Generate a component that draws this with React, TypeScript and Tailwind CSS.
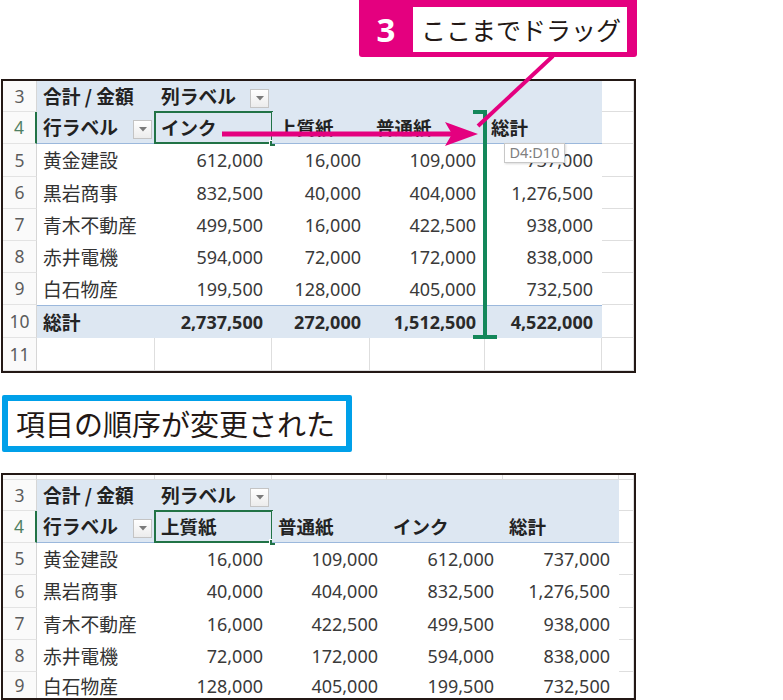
import React from 'react';

const jp = "font-['Noto_Sans_CJK_JP',sans-serif]";
const num = "font-['Noto_Sans','Noto_Sans_CJK_JP',sans-serif]";

type Data = { label: string; values: string[] };

interface SheetProps {
  cols: string;
  heights: string[]; // rows 3..11 (or 3..9) in order
  headers: string[];
  rows: Data[];
  total?: Data;
  showBlankRow?: boolean;
  partialTop?: boolean;
  className?: string;
}

const Dropdown: React.FC<{ className?: string }> = ({ className }) => (
  <div
    className={`w-[19px] h-[19px] shrink-0 border border-[#c4c4c4] bg-gradient-to-b from-white to-[#ececec] flex items-center justify-center ${className ?? ''}`}
  >
    <svg width="8" height="5" viewBox="0 0 8 5">
      <path d="M0 0h8L4 4.5z" fill="#7a7a7a" />
    </svg>
  </div>
);

const RowNum: React.FC<{ n: string; active?: boolean }> = ({ n, active }) => (
  <div
    className={`flex items-center justify-center bg-[#fafafa] border-b border-[#e3e3e3] text-[17.5px] ${num} ${
      active ? 'border-r-2 border-r-[#217346] text-[#4f7f63]' : 'border-r border-r-[#d6d6d6] text-[#5c5c5c]'
    }`}
  >
    {n}
  </div>
);

const GridCell = () => <div className="border-r border-b border-[#dedede] bg-white" />;

const Sheet: React.FC<SheetProps> = ({ cols, heights, headers, rows, total, showBlankRow, partialTop, className }) => {
  const blue = 'bg-[#dde7f2]';
  let h = 0;
  const nextH = () => heights[h++];

  return (
    <div className={`border-2 border-[#231815] bg-white overflow-hidden w-[635px] ${className ?? ''}`}>
      {partialTop && (
        <div className={`grid ${cols} h-[5px]`}>
          <div className="bg-[#fafafa] border-r border-[#d6d6d6] border-b border-b-[#e3e3e3]" />
          {[0, 1, 2, 3, 4, 5].map((i) => (
            <GridCell key={i} />
          ))}
        </div>
      )}

      {/* row 3 */}
      <div className={`grid ${cols} ${nextH()}`}>
        <RowNum n="3" />
        <div className={`${blue} flex items-center pl-[6px] whitespace-nowrap font-bold text-[18.75px] text-[#222] ${jp}`}>
          合計 / 金額
        </div>
        <div className={`${blue} flex items-center pl-[6px] whitespace-nowrap font-bold text-[18.75px] text-[#222] ${jp}`}>
          列ラベル
          <Dropdown className="ml-auto mr-[3px] mt-[3px]" />
        </div>
        <div className={blue} />
        <div className={blue} />
        <div className={blue} />
        <GridCell />
      </div>

      {/* row 4 */}
      <div className={`grid ${cols} ${nextH()}`}>
        <RowNum n="4" active />
        <div className={`${blue} border-b border-[#9bb8dc] flex items-center pl-[6px] whitespace-nowrap font-bold text-[18.75px] text-[#222] ${jp}`}>
          行ラベル
          <Dropdown className="ml-auto mr-[3px] mt-[3px]" />
        </div>
        {headers.map((t, i) => (
          <div
            key={t}
            className={`${blue} relative border-b border-[#9bb8dc] flex items-center pl-[6px] whitespace-nowrap font-bold text-[18.5px] text-[#222] ${jp}`}
          >
            {t}
            {i === 0 && (
              <div className="absolute -left-[1px] -top-[1px] -right-[1px] -bottom-[1px] border-2 border-[#217346]">
                <div className="absolute -right-[5px] -bottom-[5px] w-[7px] h-[7px] bg-[#217346] border border-white" />
              </div>
            )}
          </div>
        ))}
        <GridCell />
      </div>

      {rows.map((r, ri) => (
        <div key={r.label} className={`grid ${cols} ${nextH()}`}>
          <RowNum n={String(5 + ri)} />
          <div className={`flex items-center pl-[6px] text-[18.75px] text-[#333] ${jp}`}>{r.label}</div>
          {r.values.map((v, i) => (
            <div key={i} className={`flex items-center justify-end pr-[9px] text-[18px] text-[#3a3a3a] ${num}`}>
              {v}
            </div>
          ))}
          <GridCell />
        </div>
      ))}

      {total && (
        <div className={`grid ${cols} ${nextH()}`}>
          <RowNum n="10" />
          <div className={`${blue} border-t border-[#9bb8dc] flex items-center pl-[6px] font-bold text-[18.75px] text-[#222] ${jp}`}>
            {total.label}
          </div>
          {total.values.map((v, i) => (
            <div
              key={i}
              className={`${blue} border-t border-[#9bb8dc] flex items-center justify-end pr-[9px] font-bold text-[18px] text-[#2a2a2a] ${num}`}
            >
              {v}
            </div>
          ))}
          <GridCell />
        </div>
      )}

      {showBlankRow && (
        <div className={`grid ${cols} ${nextH()}`}>
          <RowNum n="11" />
          {[0, 1, 2, 3, 4, 5].map((i) => (
            <GridCell key={i} />
          ))}
        </div>
      )}
    </div>
  );
};

const before: Data[] = [
  { label: '黄金建設', values: ['612,000', '16,000', '109,000', '737,000'] },
  { label: '黒岩商事', values: ['832,500', '40,000', '404,000', '1,276,500'] },
  { label: '青木不動産', values: ['499,500', '16,000', '422,500', '938,000'] },
  { label: '赤井電機', values: ['594,000', '72,000', '172,000', '838,000'] },
  { label: '白石物産', values: ['199,500', '128,000', '405,000', '732,500'] },
];

const after: Data[] = [
  { label: '黄金建設', values: ['16,000', '109,000', '612,000', '737,000'] },
  { label: '黒岩商事', values: ['40,000', '404,000', '832,500', '1,276,500'] },
  { label: '青木不動産', values: ['16,000', '422,500', '499,500', '938,000'] },
  { label: '赤井電機', values: ['72,000', '172,000', '594,000', '838,000'] },
  { label: '白石物産', values: ['128,000', '405,000', '199,500', '732,500'] },
];

export default function App() {
  return (
    <div className="relative w-[783px] h-[700px] bg-white overflow-hidden">
      {/* step callout */}
      <div className="flex pl-[359px]">
        <div className="flex w-[278px] h-[57px] bg-[#e4007f] rounded-b-[3px] pt-[7px] pb-[5px] pr-[10px]">
          <div className={`w-[54px] flex items-center justify-center text-white font-bold text-[33px] ${num}`}>3</div>
          <div className={`flex-1 bg-white flex items-center pl-[8px] text-[25px] text-[#231815] ${jp}`}>ここまでドラッグ</div>
        </div>
      </div>

      <Sheet
        className="mt-[22px] ml-[1px]"
        cols="grid-cols-[34px_118px_117px_98px_115px_117px_32px]"
        heights={['h-[31px]', 'h-[32px]', 'h-[33px]', 'h-[32px]', 'h-[32px]', 'h-[32px]', 'h-[32px]', 'h-[33px]', 'h-[33px]']}
        headers={['インク', '上質紙', '普通紙', '総計']}
        rows={before}
        total={{ label: '総計', values: ['2,737,500', '272,000', '1,512,500', '4,522,000'] }}
        showBlankRow
      />

      {/* result callout */}
      <div className="mt-[22px] ml-[2px] w-[350px] h-[57px] border-[6px] border-[#00a0e9] rounded-[2px] flex items-center pl-[8px]">
        <span className={`text-[29px] text-[#231815] whitespace-nowrap ${jp}`}>項目の順序が変更された</span>
      </div>

      <Sheet
        className="mt-[21px] ml-[1px] h-[227px]"
        cols="grid-cols-[34px_118px_117px_115px_116px_116px_15px]"
        heights={['h-[31px]', 'h-[32px]', 'h-[32px]', 'h-[33px]', 'h-[32px]', 'h-[32px]', 'h-[26px]']}
        headers={['上質紙', '普通紙', 'インク', '総計']}
        rows={after}
        partialTop
      />

      {/* drag indicator tooltip */}
      <div className={`absolute left-[504px] top-[143px] w-[61px] h-[20px] bg-white border border-[#c8c8c8] shadow-[1px_1px_2px_rgba(0,0,0,0.15)] flex items-center justify-center text-[14.5px] text-[#808080] ${num}`}>
        D4:D10
      </div>

      {/* drag marks */}
      <svg className="absolute left-0 top-0 pointer-events-none" width="783" height="700">
        <rect x="483" y="110" width="4" height="229" fill="#13875a" />
        <rect x="473" y="110" width="14" height="4" fill="#13875a" />
        <rect x="473" y="335" width="24" height="4" fill="#13875a" />
        <line x1="222" y1="134" x2="452" y2="134" stroke="#e4007f" strokeWidth="5" />
        <polygon points="445,122 478,134 445,146 452,134" fill="#e4007f" />
        <line x1="553" y1="56" x2="478" y2="126" stroke="#e4007f" strokeWidth="4" />
      </svg>
    </div>
  );
}
